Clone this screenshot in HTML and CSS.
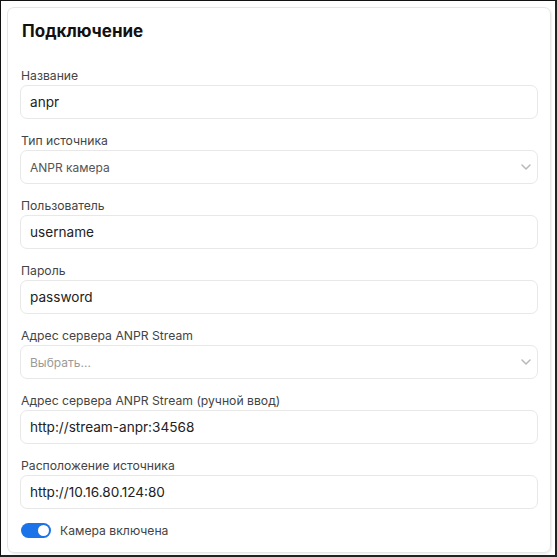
FILE: index.html
```html
<!DOCTYPE html>
<html lang="ru">
<head>
<meta charset="utf-8">
<link rel="stylesheet" href="styles.css">
</head>
<body>
<div class="frame">
  <div class="card">
    <h2 class="title">Подключение</h2>
    <div class="field">
      <div class="label">Название</div>
      <div class="input"><span class="value">anpr</span></div>
    </div>
    <div class="field">
      <div class="label">Тип источника</div>
      <div class="input select"><span class="sel-value">ANPR камера</span>
        <svg class="chev" width="10" height="6" viewBox="0 0 10 6"><path d="M1 1l4 4 4-4" fill="none" stroke="#b8b8b8" stroke-width="1.5" stroke-linecap="round" stroke-linejoin="round"/></svg>
      </div>
    </div>
    <div class="field">
      <div class="label">Пользователь</div>
      <div class="input"><span class="value">username</span></div>
    </div>
    <div class="field">
      <div class="label">Пароль</div>
      <div class="input"><span class="value">password</span></div>
    </div>
    <div class="field">
      <div class="label">Адрес сервера ANPR Stream</div>
      <div class="input select"><span class="placeholder">Выбрать...</span>
        <svg class="chev" width="10" height="6" viewBox="0 0 10 6"><path d="M1 1l4 4 4-4" fill="none" stroke="#b8b8b8" stroke-width="1.5" stroke-linecap="round" stroke-linejoin="round"/></svg>
      </div>
    </div>
    <div class="field">
      <div class="label">Адрес сервера ANPR Stream (ручной ввод)</div>
      <div class="input"><span class="value">http://stream-anpr:34568</span></div>
    </div>
    <div class="field">
      <div class="label">Расположение источника</div>
      <div class="input"><span class="value">http://10.16.80.124:80</span></div>
    </div>
    <div class="toggle-row">
      <span class="switch"><span class="knob"></span></span>
      <span class="toggle-label">Камера включена</span>
    </div>
  </div>
</div>
</body>
</html>
```
FILE: styles.css
```css
* { box-sizing: border-box; }
html, body { margin: 0; padding: 0; background: #fff; }
body { font-family: Inter, "Noto Sans", sans-serif; color: #333; }
.frame {
  width: 557px;
  height: 557px;
  border-left: 1px solid #111;
  border-top: 1px solid #111;
  border-right: 2px solid #222;
  border-bottom: 2px solid #222;
  padding: 6px 4px 2px 6px;
}
.card {
  height: 100%;
  border: 1px solid #e6e6e6;
  border-radius: 7px;
  padding: 12px 12px 0 12px;
  box-shadow: 1px 1px 2px rgba(0,0,0,0.08);
}
.title {
  margin: 0 0 26px 2px;
  font-size: 17px;
  line-height: 22px;
  font-weight: 700;
  color: #111;
}
.field { margin-bottom: 14px; }
.label {
  font-size: 12.2px;
  line-height: 16px;
  color: #444;
  margin: 0 0 1px 1px;
}
.input {
  height: 34px;
  border: 1px solid #e8e8e8;
  border-radius: 7px;
  background: #fff;
  display: flex;
  align-items: center;
  padding: 0 6px 0 9px;
}
.value { font-size: 13.6px; color: #222; }
.sel-value { font-size: 12px; color: #555; }
.placeholder { font-size: 12px; color: #9a9a9a; }
.select { justify-content: space-between; }
.toggle-row {
  display: flex;
  align-items: center;
  gap: 9px;
  margin: 0 0 0 1px;
  height: 15px;
}
.switch {
  width: 30px;
  height: 15px;
  border-radius: 8px;
  background: #1a73e8;
  display: flex;
  align-items: center;
  justify-content: flex-end;
  padding: 0 2px;
}
.knob {
  width: 11px;
  height: 11px;
  border-radius: 50%;
  background: #fff;
}
.toggle-label { font-size: 12.2px; color: #444; }
```
